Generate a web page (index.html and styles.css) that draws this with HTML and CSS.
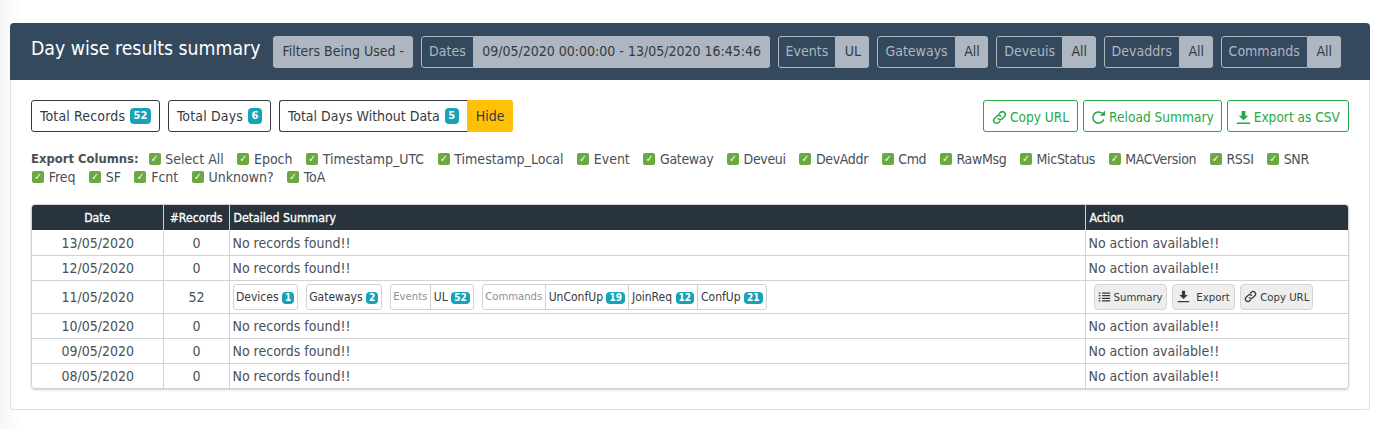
FILE: index.html
```html
<!DOCTYPE html>
<html lang="en">
<head>
    <meta charset="UTF-8">
    <meta name="viewport" content="width=device-width, initial-scale=1.0">
    <title>Day wise results summary</title>
    <link rel="stylesheet" href="styles.css">
</head>
<body>
    <svg class="icon-defs" width="0" height="0">
        <symbol id="i-link" viewBox="0 0 16 16">
            <path d="M6.6 9.4a3 3 0 0 0 4.3 0l2.4-2.4a3 3 0 0 0-4.3-4.3L7.7 3.9M9.4 6.6a3 3 0 0 0-4.3 0L2.7 9a3 3 0 0 0 4.3 4.3l1.3-1.2" fill="none" stroke="currentColor" stroke-width="1.6" stroke-linecap="round"/>
        </symbol>
        <symbol id="i-reload" viewBox="0 0 16 16">
            <path d="M13.6 10.2A6 6 0 1 1 12 3.6" fill="none" stroke="currentColor" stroke-width="1.7"/>
            <path d="M9.4 6h5.6V.6z" fill="currentColor"/>
        </symbol>
        <symbol id="i-download" viewBox="0 0 16 16">
            <path d="M6 1h4v5h3.2L8 11 2.8 6H6zM1 13.4h14V15H1z" fill="currentColor"/>
        </symbol>
        <symbol id="i-list" viewBox="0 0 16 16">
            <path d="M1 3h2v1.6H1zM5 3h10v1.6H5zM1 6.2h2v1.6H1zM5 6.2h10v1.6H5zM1 9.4h2V11H1zM5 9.4h10V11H5zM1 12.6h2v1.6H1zM5 12.6h10v1.6H5z" fill="currentColor"/>
        </symbol>
    </svg>

    <div class="card">
        <div class="card-header">
            <h1>Day wise results summary</h1>
            <span class="filter-title">Filters Being Used -</span>
            <div class="filter"><span class="filter-name">Dates</span><span class="filter-value">09/05/2020 00:00:00 - 13/05/2020 16:45:46</span></div>
            <div class="filter"><span class="filter-name">Events</span><span class="filter-value">UL</span></div>
            <div class="filter"><span class="filter-name">Gateways</span><span class="filter-value">All</span></div>
            <div class="filter"><span class="filter-name">Deveuis</span><span class="filter-value">All</span></div>
            <div class="filter"><span class="filter-name">Devaddrs</span><span class="filter-value">All</span></div>
            <div class="filter"><span class="filter-name">Commands</span><span class="filter-value">All</span></div>
        </div>
        <div class="card-body">
            <div class="toolbar">
                <span class="total total-wide">Total Records <span class="badge">52</span></span>
                <span class="total total-wide">Total Days <span class="badge">6</span></span>
                <div class="total-group">
                    <span class="total">Total Days Without Data <span class="badge">5</span></span>
                    <button class="btn-hide">Hide</button>
                </div>
                <div class="toolbar-actions">
                    <button class="btn-green"><svg class="icon"><use href="#i-link"/></svg>Copy URL</button>
                    <button class="btn-green btn-reload"><svg class="icon"><use href="#i-reload"/></svg>Reload Summary</button>
                    <button class="btn-green"><svg class="icon"><use href="#i-download"/></svg>Export as CSV</button>
                </div>
            </div>

            <div class="columns">
                <strong>Export Columns:</strong>
                <label class="check">Select All</label>
                <label class="check">Epoch</label>
                <label class="check">Timestamp_UTC</label>
                <label class="check">Timestamp_Local</label>
                <label class="check">Event</label>
                <label class="check check-tight">Gateway</label>
                <label class="check check-tight">Deveui</label>
                <label class="check check-tight">DevAddr</label>
                <label class="check check-tight">Cmd</label>
                <label class="check check-tight">RawMsg</label>
                <label class="check check-tight">MicStatus</label>
                <label class="check check-tight">MACVersion</label>
                <label class="check check-tight">RSSI</label>
                <label class="check check-tight">SNR</label>
                <label class="check">Freq</label>
                <label class="check">SF</label>
                <label class="check">Fcnt</label>
                <label class="check">Unknown?</label>
                <label class="check">ToA</label>
            </div>

            <div class="table-wrap">
                <table>
                    <colgroup>
                        <col class="col-date"><col class="col-count"><col><col class="col-action">
                    </colgroup>
                    <thead>
                        <tr>
                            <th class="center">Date</th>
                            <th class="center">#Records</th>
                            <th>Detailed Summary</th>
                            <th>Action</th>
                        </tr>
                    </thead>
                    <tbody>
                        <tr><td class="center">13/05/2020</td><td class="center">0</td><td>No records found!!</td><td>No action available!!</td></tr>
                        <tr><td class="center">12/05/2020</td><td class="center">0</td><td>No records found!!</td><td>No action available!!</td></tr>
                        <tr class="row-data">
                            <td class="center">11/05/2020</td>
                            <td class="center">52</td>
                            <td>
                                <div class="chips">
                                    <div class="chip"><span>Devices <span class="badge">1</span></span></div>
                                    <div class="chip"><span>Gateways <span class="badge">2</span></span></div>
                                    <div class="chip"><span class="chip-name">Events</span><span>UL <span class="badge">52</span></span></div>
                                    <div class="chip"><span class="chip-name">Commands</span><span>UnConfUp <span class="badge">19</span></span><span>JoinReq <span class="badge">12</span></span><span>ConfUp <span class="badge">21</span></span></div>
                                </div>
                            </td>
                            <td>
                                <div class="row-actions">
                                    <button class="btn-light"><svg class="icon"><use href="#i-list"/></svg>Summary</button>
                                    <button class="btn-light btn-export"><svg class="icon"><use href="#i-download"/></svg>&nbsp;Export</button>
                                    <button class="btn-light"><svg class="icon"><use href="#i-link"/></svg>Copy URL</button>
                                </div>
                            </td>
                        </tr>
                        <tr><td class="center">10/05/2020</td><td class="center">0</td><td>No records found!!</td><td>No action available!!</td></tr>
                        <tr><td class="center">09/05/2020</td><td class="center">0</td><td>No records found!!</td><td>No action available!!</td></tr>
                        <tr><td class="center">08/05/2020</td><td class="center">0</td><td>No records found!!</td><td>No action available!!</td></tr>
                    </tbody>
                </table>
            </div>
        </div>
    </div>
</body>
</html>
```

FILE: styles.css
```css
* {
    box-sizing: border-box;
}
body {
    margin: 0;
    padding: 23px 14px 19px 10px;
    background: linear-gradient(to right, #f6f6f6, #fff 22px);
    color: #495057;
    font-family: 'DejaVu Sans', sans-serif;
    font-stretch: condensed;
    font-size: 14px;
}
button {
    font: inherit;
    cursor: pointer;
}
.icon-defs {
    display: block;
    position: absolute;
}
.icon {
    width: 14px;
    height: 14px;
    margin-right: 4px;
    vertical-align: -2px;
}
.card {
    background-color: #fff;
    border: 1px solid #dfe1e3;
    border-top: 0;
    border-radius: 4px;
}
.card-header {
    display: flex;
    align-items: center;
    height: 57px;
    padding: 0 21px;
    margin: 0 -1px;
    background-color: #34495e;
    border-radius: 4px 4px 0 0;
    white-space: nowrap;
}
h1 {
    margin: 0 13px 7px 0;
    font-size: 19.3px;
    font-weight: 400;
    color: #fff;
}
.filter-title {
    display: flex;
    align-items: center;
    height: 32px;
    padding: 0 9px 1px;
    margin-right: 8px;
    background-color: #aeb6c1;
    color: #343a40;
    border-radius: 3px;
}
.filter {
    display: flex;
    height: 32px;
    margin-right: 8px;
    color: #343a40;
}
.filter-name {
    display: flex;
    align-items: center;
    padding: 0 7px 1px;
    color: #aeb6c1;
    border: 1px solid #aeb6c1;
    border-radius: 3px 0 0 3px;
}
.filter-value {
    display: flex;
    align-items: center;
    padding: 0 8.5px 1px;
    background-color: #aeb6c1;
    border-radius: 0 3px 3px 0;
}
.card-body {
    padding: 20px 20px;
}
.toolbar {
    display: flex;
    align-items: center;
    gap: 8px;
    height: 32px;
}
.total {
    display: flex;
    align-items: center;
    gap: 5px;
    height: 32px;
    padding: 0 8px;
    color: #343a40;
    border: 1px solid #343a40;
    border-radius: 3px;
}
.total-wide {
    letter-spacing: 0.15px;
}
.total-group {
    display: flex;
}
.total-group .total {
    border-right: 0;
    border-radius: 3px 0 0 3px;
}
.btn-hide {
    height: 32px;
    padding: 0 9px;
    background-color: #ffc107;
    color: #343a40;
    border: 0;
    border-radius: 0 3px 3px 0;
}
.toolbar-actions {
    display: flex;
    gap: 5px;
    margin-left: auto;
}
.btn-green {
    height: 32px;
    padding: 1px 8px 0;
    background-color: #fff;
    color: #28a745;
    font-size: 13.6px;
    border: 1px solid #28a745;
    border-radius: 3px;
}
.btn-green .icon {
    width: 15px;
    height: 15px;
    margin-right: 3px;
    vertical-align: -3px;
}
.btn-reload {
    padding: 1px 7px 0;
}
.badge {
    display: inline-block;
    padding: 0 3.5px;
    background-color: #17a2b8;
    color: #fff;
    font-size: 11px;
    font-weight: 700;
    line-height: 16px;
    letter-spacing: 0;
    border-radius: 4px;
}
.columns {
    display: flex;
    flex-wrap: wrap;
    column-gap: 12.5px;
    margin-top: 18px;
    line-height: 18px;
}
.columns strong {
    margin-right: -3.5px;
    font-size: 12.9px;
}
.check {
    display: inline-flex;
    align-items: center;
    gap: 4.7px;
    margin-left: 1px;
}
.check-tight {
    letter-spacing: -0.33px;
}
.check::before {
    content: "✓";
    display: block;
    width: 12px;
    height: 12px;
    background-color: #6aa842;
    color: #fff;
    font-size: 10px;
    font-weight: 700;
    line-height: 12px;
    text-align: center;
    border-radius: 2px;
}
.table-wrap {
    margin-top: 18px;
    border: 1px solid #d0d2d4;
    border-radius: 4px;
    overflow: hidden;
    box-shadow: 0 1px 2px rgba(0, 0, 0, 0.2);
}
table {
    width: 100%;
    border-collapse: collapse;
    table-layout: fixed;
}
.col-date {
    width: 131px;
}
.col-count {
    width: 66px;
}
.col-action {
    width: 263px;
}
th {
    height: 25px;
    padding: 0 4px;
    background-color: #29333d;
    color: #fff;
    font-size: 12.2px;
    font-weight: 400;
    -webkit-text-stroke: 0.3px #fff;
    text-align: left;
    border-left: 1px solid #d0d2d4;
}
th.center, td.center {
    text-align: center;
}
th:first-child, td:first-child {
    border-left: 0;
}
td {
    height: 25px;
    padding: 1px 2px 0 3px;
    border-top: 1px solid #d0d2d4;
    border-left: 1px solid #d0d2d4;
}
thead + tbody tr:first-child td {
    border-top: 0;
}
.row-data td {
    height: 33px;
    padding-top: 0;
}
.chips {
    display: flex;
    gap: 8px;
    font-size: 12px;
    color: #343a40;
}
.chip {
    display: flex;
    align-items: center;
    height: 26px;
    border: 1px solid #d0d2d4;
    border-radius: 3px;
}
.chip > span {
    padding: 0 2.5px;
    line-height: 24px;
    border-left: 1px solid #d0d2d4;
}
.chip > span:first-child {
    border-left: 0;
}
.chip > span + span {
    padding: 0 3px;
}
.chip-name {
    color: #8a9097;
    font-size: 11.2px;
}
.chips .badge {
    font-size: 10px;
    line-height: 12px;
    padding: 0 3px;
}
.row-actions {
    display: flex;
    gap: 5px;
    padding-left: 5px;
}
.btn-light {
    height: 26px;
    padding: 0 3px;
    background-color: #eee;
    color: #343a40;
    font-size: 11.3px;
    border: 1px solid #d5d5d5;
    border-radius: 4px;
}
.btn-export {
    padding: 0 4.5px;
}
.btn-light .icon {
    width: 13px;
    height: 13px;
    margin-right: 3px;
}
```
